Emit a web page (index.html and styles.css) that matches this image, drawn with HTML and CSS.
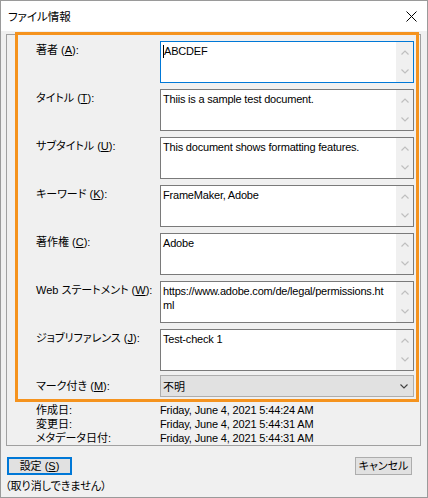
FILE: index.html
```html
<!DOCTYPE html>
<html lang="ja">
<head>
<meta charset="utf-8">
<title>ファイル情報</title>
<link rel="stylesheet" href="styles.css">
</head>
<body>
<div class="window">
  <div class="titlebar">
    <span class="title">ファイル情報</span>
    <svg class="close" width="11" height="11" viewBox="0 0 11 11"><path d="M0.5 0.5 L10.5 10.5 M10.5 0.5 L0.5 10.5" stroke="#000" stroke-width="1" fill="none"/></svg>
  </div>
  <div class="content">
    <div class="group">
      <div class="fields">
        <div class="label">著者 (<u>A</u>):</div>
        <div class="field focused">
          <div class="text"><span class="caret"></span>ABCDEF</div>
          <div class="scroll"><svg class="arrow" width="8" height="5" viewBox="0 0 8 5"><path d="M0.5 4.5 L4 1 L7.5 4.5" /></svg><svg class="arrow" width="8" height="5" viewBox="0 0 8 5"><path d="M0.5 0.5 L4 4 L7.5 0.5" /></svg></div>
        </div>

        <div class="label">タイトル (<u>T</u>):</div>
        <div class="field">
          <div class="text">Thiis is a sample test document.</div>
          <div class="scroll"><svg class="arrow" width="8" height="5" viewBox="0 0 8 5"><path d="M0.5 4.5 L4 1 L7.5 4.5" /></svg><svg class="arrow" width="8" height="5" viewBox="0 0 8 5"><path d="M0.5 0.5 L4 4 L7.5 0.5" /></svg></div>
        </div>

        <div class="label">サブタイトル (<u>U</u>):</div>
        <div class="field">
          <div class="text">This document shows formatting features.</div>
          <div class="scroll"><svg class="arrow" width="8" height="5" viewBox="0 0 8 5"><path d="M0.5 4.5 L4 1 L7.5 4.5" /></svg><svg class="arrow" width="8" height="5" viewBox="0 0 8 5"><path d="M0.5 0.5 L4 4 L7.5 0.5" /></svg></div>
        </div>

        <div class="label">キーワード (<u>K</u>):</div>
        <div class="field">
          <div class="text">FrameMaker, Adobe</div>
          <div class="scroll"><svg class="arrow" width="8" height="5" viewBox="0 0 8 5"><path d="M0.5 4.5 L4 1 L7.5 4.5" /></svg><svg class="arrow" width="8" height="5" viewBox="0 0 8 5"><path d="M0.5 0.5 L4 4 L7.5 0.5" /></svg></div>
        </div>

        <div class="label">著作権 (<u>C</u>):</div>
        <div class="field">
          <div class="text">Adobe</div>
          <div class="scroll"><svg class="arrow" width="8" height="5" viewBox="0 0 8 5"><path d="M0.5 4.5 L4 1 L7.5 4.5" /></svg><svg class="arrow" width="8" height="5" viewBox="0 0 8 5"><path d="M0.5 0.5 L4 4 L7.5 0.5" /></svg></div>
        </div>

        <div class="label">Web ステートメント (<u>W</u>):</div>
        <div class="field">
          <div class="text">https://www.adobe.com/de/legal/permissions.ht<br>ml</div>
          <div class="scroll"><svg class="arrow" width="8" height="5" viewBox="0 0 8 5"><path d="M0.5 4.5 L4 1 L7.5 4.5" /></svg><svg class="arrow" width="8" height="5" viewBox="0 0 8 5"><path d="M0.5 0.5 L4 4 L7.5 0.5" /></svg></div>
        </div>

        <div class="label">ジョブリファレンス (<u>J</u>):</div>
        <div class="field">
          <div class="text">Test-check 1</div>
          <div class="scroll"><svg class="arrow" width="8" height="5" viewBox="0 0 8 5"><path d="M0.5 4.5 L4 1 L7.5 4.5" /></svg><svg class="arrow" width="8" height="5" viewBox="0 0 8 5"><path d="M0.5 0.5 L4 4 L7.5 0.5" /></svg></div>
        </div>

        <div class="label mid">マーク付き (<u>M</u>):</div>
        <div class="select">
          <span>不明</span>
          <svg class="drop" width="8" height="5" viewBox="0 0 8 5"><path d="M0.5 0.5 L4 4 L7.5 0.5" /></svg>
        </div>
      </div>
      <div class="dates">
        <div>作成日:</div><div class="val">Friday, June 4, 2021 5:44:24 AM</div>
        <div>変更日:</div><div class="val">Friday, June 4, 2021 5:44:31 AM</div>
        <div>メタデータ日付:</div><div class="val">Friday, June 4, 2021 5:44:31 AM</div>
      </div>
    </div>
    <div class="footer">
      <div class="left">
        <button class="btn primary">設定 (<u>S</u>)</button>
        <div class="note">（取り消しできません）</div>
      </div>
      <button class="btn cancel">キャンセル</button>
    </div>
  </div>
</div>
</body>
</html>
```
FILE: styles.css
```css
body {
  margin: 0;
  background: #ffffff;
}

.window {
  width: 428px;
  height: 498px;
  box-sizing: border-box;
  border: 1px solid #9a9a9a;
  background: #f0f0f0;
  display: flex;
  flex-direction: column;
  font-family: "Liberation Sans", "Noto Sans CJK JP", sans-serif;
  font-size: 11px;
  font-feature-settings: "palt";
  color: #000;
}

.titlebar {
  height: 30px;
  flex: none;
  background: #ffffff;
  display: flex;
  align-items: center;
  justify-content: space-between;
  padding: 0 10px 0 7px;
}

.title {
  font-size: 11.5px;
}

.close {
  display: block;
}

.content {
  flex: 1;
  display: flex;
  flex-direction: column;
}

.group {
  margin: 3px 0 0 5px;
  width: 415px;
  box-sizing: border-box;
  border: 1px solid #a0a0a0;
}

.fields {
  margin: -3px 1px 0 8px;
  border: 3px solid #f5931e;
  display: grid;
  grid-template-columns: 124px 254px;
  row-gap: 6px;
  padding: 6px 2px 2px 18px;
}

.label {
  padding-top: 2px;
  line-height: 14px;
  white-space: nowrap;
}

.label.mid {
  align-self: center;
  padding-top: 0;
  margin-top: -2px;
}

.field {
  height: 42px;
  box-sizing: border-box;
  border: 1px solid #7a7a7a;
  background: #ffffff;
  display: flex;
}

.field.focused {
  border-color: #0078d7;
}

.text {
  flex: 1;
  padding: 2px 0 0 2px;
  line-height: 14px;
  letter-spacing: -0.2px;
  overflow: hidden;
}

.caret {
  display: inline-block;
  width: 1px;
  height: 13px;
  background: #000;
  vertical-align: -3px;
}

.scroll {
  width: 17px;
  flex: none;
  box-sizing: border-box;
  background: #f0f0f0;
  display: flex;
  flex-direction: column;
  justify-content: space-between;
  align-items: center;
  padding: 8px 0;
}

.arrow {
  display: block;
}

.arrow path {
  fill: none;
  stroke: #bfbfbf;
  stroke-width: 1.2;
}

.select {
  margin-top: -2px;
  height: 22px;
  box-sizing: border-box;
  border: 1px solid #adadad;
  background: #e1e1e1;
  display: flex;
  align-items: center;
  justify-content: space-between;
  padding: 0 5px 0 2px;
}

.drop {
  display: block;
}

.drop path {
  fill: none;
  stroke: #404040;
  stroke-width: 1.1;
}

.dates {
  display: grid;
  grid-template-columns: 124px auto;
  padding-left: 29px;
  margin-top: 1px;
  line-height: 14px;
}

.val {
  letter-spacing: -0.15px;
}

.footer {
  display: flex;
  justify-content: space-between;
  align-items: flex-start;
  padding: 11px 15px 0 6px;
}

.left {
  display: flex;
  flex-direction: column;
  align-items: flex-start;
}

.btn {
  height: 18px;
  box-sizing: border-box;
  background: #e1e1e1;
  border: 1px solid #adadad;
  font: inherit;
  color: #000;
  padding: 0;
  line-height: 14px;
}

.btn.primary {
  width: 65px;
  border: 2px solid #0078d7;
}

.btn.cancel {
  width: 57px;
}

.note {
  margin: 4px 0 0 -2px;
  line-height: 14px;
}
```
